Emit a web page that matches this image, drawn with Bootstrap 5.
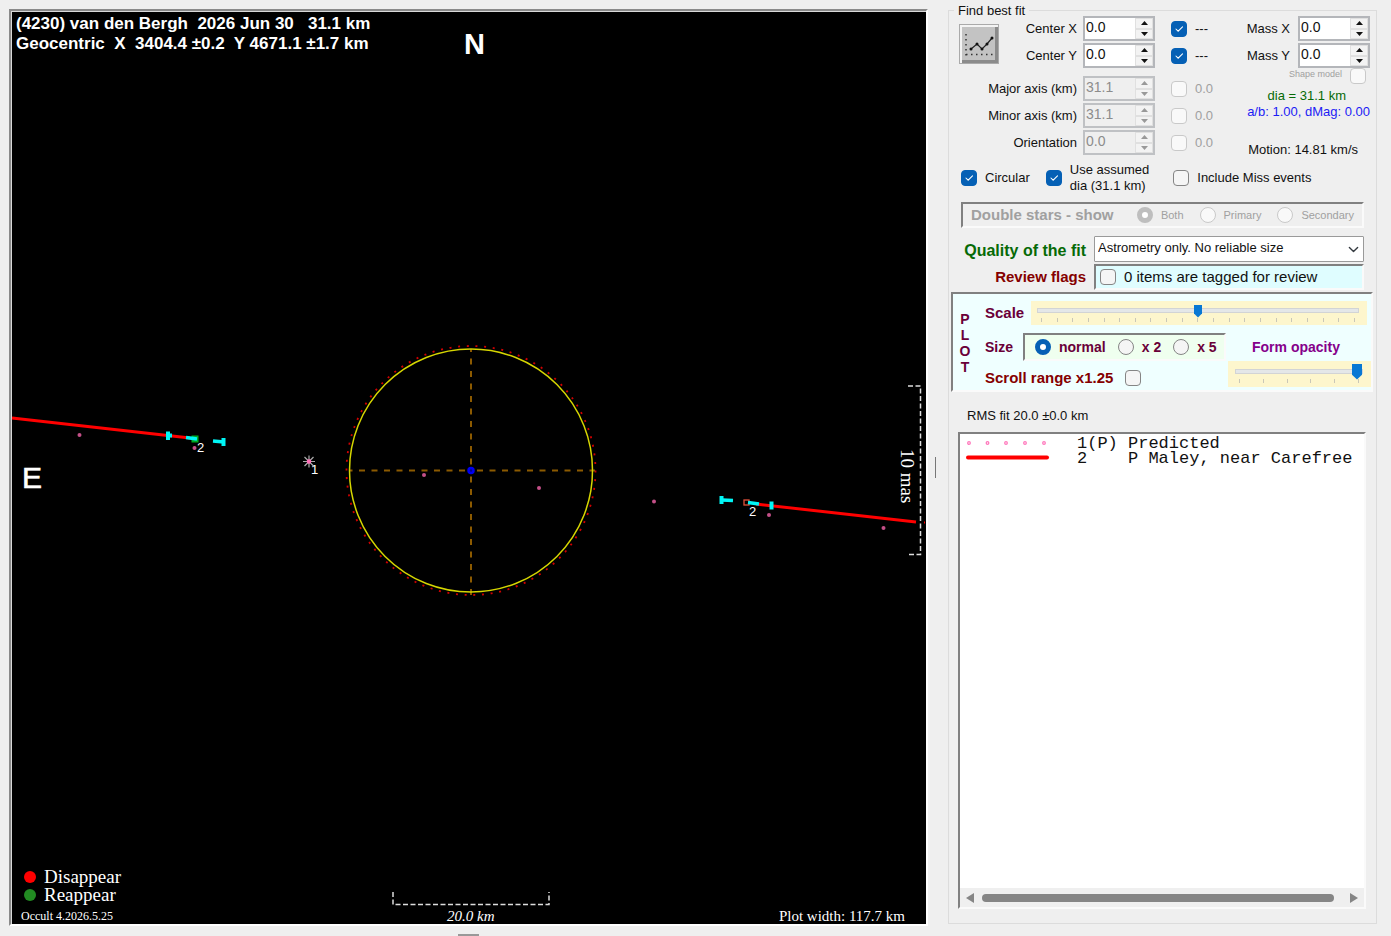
<!DOCTYPE html>
<html lang="en">
<head>
<meta charset="utf-8">
<meta name="viewport" content="width=device-width, initial-scale=1">
<title>Occult - Asteroid occultation plot</title>
<link rel="stylesheet" href="https://cdn.jsdelivr.net/npm/bootstrap@5.3.0/dist/css/bootstrap.min.css">
<style>
  body { background: #efefef; color: #111; font-family: "Liberation Sans", sans-serif; font-size: 13px; line-height: 16px; }
  .workspace { display: grid; grid-template-columns: minmax(0, 1fr) 20px 429px; min-height: 100vh; padding: 9px 14px 0 9px; grid-template-rows: minmax(0, 1fr) 10px; }
  .plot-pane { background: #000; color: #fff; border: 2px solid; border-color: #8a8a8a #fff #fff #8a8a8a; box-shadow: inset 1px 1px 0 #d8d8d8; padding: 3px 5px 0 5px; }
  .plot-title { font-size: 17px; font-weight: 700; line-height: 20px; white-space: pre; }
  .serif { font-family: "Liberation Serif", serif; }
  .legend-key { font-size: 19px; line-height: 18px; }
  .legend-key i { width: 12px; height: 12px; border-radius: 50%; display: inline-block; }
  .version-line { font-size: 12px; margin-left: -3px; }
  .width-line { font-size: 15px; }
  .grip-v { width: 1px; height: 21px; background: #777; margin-right: 5px; }
  .grip-h { width: 21px; height: 2px; background: #999; }

  .fit-group { border: 1px solid #dcdcdc; margin: 1px 0 2px; min-width: 0; padding: 0; position: relative; }
  .fit-group > legend { position: absolute; top: -8px; left: 5px; width: auto; font-size: 13px; line-height: 16px; padding: 0 4px; background: #efefef; margin: 0; }
  .fit-form { padding: 5px 6px 0 10px; }
  .inset-row { margin: 0 6px 0 2px; }
  .axes { padding-bottom: 3px; }
  .fit-rows { display: grid; grid-template-columns: 116px 72px 16px 34px; column-gap: 8px; row-gap: 2px; align-items: center; }
  .fit-rows > label { text-align: right; margin-right: -2px; }
  .fit-rows > .form-check-input { margin-left: 8px; }
  .fit-rows > span { padding-left: 8px; }
  .spin { display: flex; width: 72px; height: 25px; border: 2px solid #b4b6ba; background: #fff; }
  .spin input { width: 100%; min-width: 0; border: 0; background: transparent; padding: 0 0 3px 1px; font-size: 14px; line-height: 16px; color: #111; }
  .spin .arrows { display: flex; flex-direction: column; width: 18px; flex: none; background: #efefef; }
  .spin button { flex: 1; border: 1px solid #e0e0e0; background: #f3f3f3; padding: 0; line-height: 0; display: flex; align-items: center; justify-content: center; }
  .spin svg { width: 7px; height: 4px; fill: #111; }
  .spin.off { background: #efefef; border-color: #bfc1c4; }
  .spin.off input { color: #8c8c8c; }
  .spin.off svg { fill: #999; }
  .greyed { color: #a0a0a0; }
  .mass-row { gap: 8px; margin-bottom: 2px; }
  .chart-btn { width: 40px; height: 40px; background: #c3c3c3; border: 1px solid #aaa; box-shadow: inset 2px 2px 0 #f4f4f4, inset -3px -3px 0 #8b8b8b; padding: 0; }

  .form-check-input { width: 16px; height: 16px; margin: 0; flex: none; border: 1px solid #858585; background-color: #f5f5f5; }
  .form-check-input[type=checkbox] { border-radius: 4px; }
  .form-check-input:checked { background-color: #0560b5; border-color: #0560b5; }
  .form-check-input[type=checkbox]:checked { background-image: url("data:image/svg+xml,%3csvg xmlns='http://www.w3.org/2000/svg' viewBox='0 0 16 16'%3e%3cpath fill='none' stroke='%23fff' stroke-linecap='round' stroke-width='1.2' d='m4.5 8 2.5 2.5 5-5'/%3e%3c/svg%3e"); }
  .form-check-input[type=radio]:checked { background-image: none; background-color: #fff; border: 5px solid #0560b5; }
  .form-check-input:disabled { opacity: 1; border-color: #c9c9c9; background-color: #f9f9f9; }
  .form-check-input[type=radio]:checked:disabled { border-color: #bebebe; background-color: #fff; }
  .form-check-input:disabled ~ label { opacity: 1; }

  .sunken { border: 2px solid; border-color: #808080 #fafafa #fafafa #808080; }
  .star-box { height: 26px; }
  .micro { font-size: 11px; line-height: 12px; }
  .nano { font-size: 9px; line-height: 12px; }
  .head { font-size: 15px; font-weight: 700; }
  .headline { font-size: 16px; font-weight: 700; }
  .side-head { width: 125px; text-align: right; white-space: nowrap; flex: none; }
  .green { color: #066a06; }
  .blue { color: #1c1cf5; }
  .maroon { color: #850000; }
  .plum { color: #6a0038; }
  .purple { color: #85008b; }
  .quality { height: 26px; border: 1px solid #9a9a9a; border-radius: 1px; padding: 0 20px 3px 3px; font-size: 13px; line-height: 16px; color: #111; background-size: 11px 11px; background-position: right 4px center; }
  .flag-row { padding-top: 2px; }
  .tagged { background: #dffdff; height: 26px; font-size: 15px; }
  .plot-box { background: #efffff; width: 422px; margin-left: -8px; margin-top: 2px; padding: 7px 0 3px; font-size: 14px; font-weight: 700; }
  .letters { width: 24px; line-height: 16px; text-align: center; padding-top: 10px; flex: none; }
  .size-row { gap: 10px; }
  .size-box { background: #efffef; width: 203px; height: 28px; padding-left: 10px; }
  .slider { background: #fdf6cd; }
  .slider input { appearance: none; display: block; width: 100%; margin: 0; background: transparent; height: 16px; }
  .slider input::-webkit-slider-runnable-track { height: 5px; background: #e4e7e8; border: 1px solid #d2d4d5; }
  .slider input::-webkit-slider-thumb { appearance: none; width: 8px; height: 13px; margin-top: -4px; border: 0; background: #0878d4; clip-path: polygon(0 0, 100% 0, 100% 70%, 50% 100%, 0 70%); }
  .slider.big input::-webkit-slider-thumb { width: 10px; height: 16px; margin-top: -6px; }
  .ticks { display: flex; justify-content: space-between; height: 4px; padding: 0 4px; }
  .ticks i { width: 1px; background: #c9c7b8; }
  .scale-slider { width: 336px; height: 24px; padding: 1px 8px 0 6px; }
  .opacity-slider { width: 143px; height: 26px; padding: 2px 8px 0 7px; }

  .chord-list { background: #fff; font-family: "Liberation Mono", monospace; font-size: 17px; line-height: 15px; margin: 0 4px 14px -1px; }
  .chord-list li { white-space: pre; display: flex; align-items: center; height: 15px; }
  .chord-list li svg { width: 84px; height: 15px; flex: none; margin: 0 27px 0 6px; }
  .chord-list ul { padding: 2px 0 0; margin: 0; list-style: none; overflow: hidden; }
  .hbar { height: 19px; background: #efefef; padding: 0 6px; gap: 8px; }
  .hbar button { border: 0; background: none; padding: 0; line-height: 0; }
  .hbar .thumb { height: 8px; border-radius: 4px; background: #858585; margin-right: 8px; }
</style>
</head>
<body>
<main class="workspace">
  <section class="plot-pane position-relative d-flex flex-column justify-content-between" aria-label="Occultation plot">
    <svg class="position-absolute top-0 start-0 w-100 h-100" viewBox="11 11 915 913" role="img" aria-label="Chords and fitted circle">
      <g fill="none">
        <circle cx="471" cy="470.500" r="124.500" stroke="#d00000" stroke-width="1.800" stroke-dasharray="2 6.690"/>
        <path d="M471 470.500V349M471 470.500V595M471 470.500H350M471 470.500H595" stroke="#8c5a00" stroke-width="2" stroke-dasharray="6 6.500" stroke-dashoffset="-6"/>
        <circle cx="471" cy="470.500" r="121.500" stroke="#d6d600" stroke-width="1.500"/>
        <circle cx="471" cy="470.500" r="2.500" fill="#000090" stroke="#0000f0" stroke-width="2.500"/>
        <path d="M12 418L190 438M756 504L916 522" stroke="#f00" stroke-width="3"/>
        <path d="M924 522.500h1" stroke="#f00" stroke-width="2"/>
        <rect x="192" y="436" width="6" height="6" fill="#00a020" stroke="#00b020"/>
        <rect x="744" y="500" width="5" height="5" stroke="#e0503a" stroke-width="1.300"/>
        <g stroke="#00f6f6">
          <path d="M186 437.500L197 439M213 441L224 442M722 500L733 500.500M748 502.500L759 504" stroke-width="3.500"/>
          <path d="M168 431.500V440M223.500 438V446M721.500 496V504M771.500 501.500V509.500" stroke-width="4"/>
          <path d="M166 435.500H172" stroke-width="4"/>
        </g>
        <path d="M309 455.500V467.500M303 461.500H315M304.500 457L313.500 466M313.500 457L304.500 466" stroke="#aaa" stroke-width="1.200"/>
        <g stroke="#ddd" stroke-width="1.500" stroke-dasharray="5 2.500">
          <path d="M908 386H920.500V554.500H908"/>
          <path d="M393 892V904.500H549V892"/>
        </g>
      </g>
      <g fill="#c45088">
        <circle cx="79.500" cy="435" r="2"/><circle cx="194.500" cy="448" r="2"/><circle cx="309" cy="461.500" r="2.300" fill="#ff70b8"/>
        <circle cx="424" cy="475" r="2"/><circle cx="539" cy="488" r="2"/><circle cx="654" cy="501.500" r="2"/>
        <circle cx="769" cy="515" r="2"/><circle cx="883.500" cy="528" r="2"/>
      </g>
      <g fill="#fff" font-family="Liberation Sans, sans-serif">
        <text x="464" y="54" font-size="29" font-weight="700">N</text>
        <text x="22" y="488" font-size="30" stroke="#fff" stroke-width="0.600">E</text>
        <g font-size="13"><text x="197" y="452">2</text><text x="311" y="474">1</text><text x="749" y="516">2</text></g>
      </g>
      <g fill="#fff" font-family="Liberation Serif, serif">
        <text x="449" y="0" font-size="19" transform="translate(901 0) rotate(90)">10 mas</text>
        <text x="447" y="921" font-size="15" font-style="italic">20.0 km</text>
      </g>
    </svg>
    <div class="plot-title">(4230) van den Bergh  2026 Jun 30   31.1 km
Geocentric  X  3404.4 ±0.2  Y 4671.1 ±1.7 km</div>
    <div class="serif ps-2">
      <div class="legend-key d-flex align-items-center gap-2"><i style="background:#f00"></i>Disappear</div>
      <div class="legend-key d-flex align-items-center gap-2"><i style="background:#228b22"></i>Reappear</div>
      <div class="d-flex justify-content-between align-items-end pt-1 pe-3">
        <span class="version-line">Occult 4.2026.5.25</span><span class="width-line">Plot width: 117.7 km</span>
      </div>
    </div>
  </section>
  <div class="d-flex align-items-center justify-content-center"><div class="grip-v"></div></div>

  <fieldset class="fit-group d-flex flex-column">
    <legend>Find best fit</legend>
    <div class="fit-form d-flex flex-column flex-grow-1">
      <div class="d-flex justify-content-between">
        <div class="axes position-relative">
          <button class="chart-btn position-absolute top-0 start-0 mt-2" type="button" aria-label="Fit chart">
            <svg width="38" height="38" viewBox="0 0 38 38"><path d="M6 9v22M6 29.500h27" fill="none" stroke="#333" stroke-width="1.500" stroke-dasharray="1.500 3.500"/><path d="M11 24l6-5 5 5 5-5 5-6" fill="none" stroke="#222" stroke-width="1.200"/><g fill="#111"><circle cx="11" cy="24" r="1.500"/><circle cx="17" cy="19" r="1.500"/><circle cx="22" cy="24" r="1.500"/><circle cx="27" cy="19" r="1.500"/><circle cx="32" cy="13" r="1.500"/></g></svg>
          </button>
          <div class="fit-rows">
            <label for="cx">Center X</label>
            <div class="spin"><input id="cx" value="0.0"><div class="arrows"><button type="button" aria-label="Increase"><svg viewBox="0 0 7 4"><path d="M0 4h7L3.500 0z"/></svg></button><button type="button" aria-label="Decrease"><svg viewBox="0 0 7 4"><path d="M0 0h7L3.500 4z"/></svg></button></div></div>
            <input class="form-check-input" type="checkbox" id="fx" checked><span><label for="fx">---</label></span>
            <label for="cy">Center Y</label>
            <div class="spin"><input id="cy" value="0.0"><div class="arrows"><button type="button" aria-label="Increase"><svg viewBox="0 0 7 4"><path d="M0 4h7L3.500 0z"/></svg></button><button type="button" aria-label="Decrease"><svg viewBox="0 0 7 4"><path d="M0 0h7L3.500 4z"/></svg></button></div></div>
            <input class="form-check-input" type="checkbox" id="fy" checked><span><label for="fy">---</label></span>
          </div>
          <div class="fit-rows mt-2">
            <label for="maj">Major axis (km)</label>
            <div class="spin off"><input id="maj" value="31.1" disabled><div class="arrows"><button type="button" disabled aria-label="Increase"><svg viewBox="0 0 7 4"><path d="M0 4h7L3.500 0z"/></svg></button><button type="button" disabled aria-label="Decrease"><svg viewBox="0 0 7 4"><path d="M0 0h7L3.500 4z"/></svg></button></div></div>
            <input class="form-check-input" type="checkbox" id="fmaj" disabled><span class="greyed"><label for="fmaj">0.0</label></span>
            <label for="min">Minor axis (km)</label>
            <div class="spin off"><input id="min" value="31.1" disabled><div class="arrows"><button type="button" disabled aria-label="Increase"><svg viewBox="0 0 7 4"><path d="M0 4h7L3.500 0z"/></svg></button><button type="button" disabled aria-label="Decrease"><svg viewBox="0 0 7 4"><path d="M0 0h7L3.500 4z"/></svg></button></div></div>
            <input class="form-check-input" type="checkbox" id="fmin" disabled><span class="greyed"><label for="fmin">0.0</label></span>
            <label for="ori">Orientation</label>
            <div class="spin off"><input id="ori" value="0.0" disabled><div class="arrows"><button type="button" disabled aria-label="Increase"><svg viewBox="0 0 7 4"><path d="M0 4h7L3.500 0z"/></svg></button><button type="button" disabled aria-label="Decrease"><svg viewBox="0 0 7 4"><path d="M0 0h7L3.500 4z"/></svg></button></div></div>
            <input class="form-check-input" type="checkbox" id="fori" disabled><span class="greyed"><label for="fori">0.0</label></span>
          </div>
        </div>
        <div class="d-flex flex-column align-items-end">
          <div class="mass-row d-flex align-items-center"><label for="mx">Mass X</label>
            <div class="spin"><input id="mx" value="0.0"><div class="arrows"><button type="button" aria-label="Increase"><svg viewBox="0 0 7 4"><path d="M0 4h7L3.500 0z"/></svg></button><button type="button" aria-label="Decrease"><svg viewBox="0 0 7 4"><path d="M0 0h7L3.500 4z"/></svg></button></div></div></div>
          <div class="d-flex align-items-center gap-2"><label for="my">Mass Y</label>
            <div class="spin"><input id="my" value="0.0"><div class="arrows"><button type="button" aria-label="Increase"><svg viewBox="0 0 7 4"><path d="M0 4h7L3.500 0z"/></svg></button><button type="button" aria-label="Decrease"><svg viewBox="0 0 7 4"><path d="M0 0h7L3.500 4z"/></svg></button></div></div></div>
          <div class="d-flex gap-2 pe-1"><label class="nano greyed" for="shape">Shape model</label><input class="form-check-input" type="checkbox" id="shape" disabled></div>
          <div class="green pe-4 pt-1">dia = 31.1 km</div>
          <div class="blue">a/b: 1.00, dMag: 0.00</div>
          <div class="mt-auto me-2 pe-1">Motion: 14.81 km/s</div>
        </div>
      </div>

      <div class="inset-row d-flex align-items-center pt-1">
        <div class="d-flex align-items-center gap-2 me-3"><input class="form-check-input" type="checkbox" id="circ" checked><label for="circ">Circular</label></div>
        <div class="d-flex align-items-center gap-2 me-4"><input class="form-check-input" type="checkbox" id="assumed" checked><label for="assumed">Use assumed<br>dia (31.1 km)</label></div>
        <div class="d-flex align-items-center gap-2"><input class="form-check-input" type="checkbox" id="miss"><label for="miss">Include Miss events</label></div>
      </div>

      <div class="inset-row pt-2"><div class="star-box sunken d-flex align-items-center greyed px-2">
        <span class="head flex-grow-1">Double stars - show</span>
        <div class="d-flex gap-3 align-items-center micro">
          <div class="d-flex gap-2 align-items-center"><input class="form-check-input" type="radio" name="dbl" id="both" checked disabled><label for="both">Both</label></div>
          <div class="d-flex gap-2 align-items-center"><input class="form-check-input" type="radio" name="dbl" id="prim" disabled><label for="prim">Primary</label></div>
          <div class="d-flex gap-2 align-items-center"><input class="form-check-input" type="radio" name="dbl" id="sec" disabled><label for="sec">Secondary</label></div>
        </div>
      </div></div>

      <div class="inset-row d-flex align-items-center gap-2 pt-2">
        <label class="headline green side-head pt-1" for="quality">Quality of the fit</label>
        <select class="form-select quality" id="quality"><option>Astrometry only. No reliable size</option></select>
      </div>
      <div class="inset-row flag-row d-flex align-items-center gap-2">
        <span class="head maroon side-head">Review flags</span>
        <div class="tagged sunken d-flex align-items-center gap-2 flex-grow-1 ps-1"><input class="form-check-input" type="checkbox" id="rev"><label for="rev">0 items are tagged for review</label></div>
      </div>

      <section class="plot-box sunken d-flex plum">
        <div class="letters">P<br>L<br>O<br>T</div>
        <div class="flex-grow-1 ps-2">
          <div class="d-flex justify-content-between align-items-center pe-1"><label class="head" for="scale">Scale</label>
            <div class="slider scale-slider"><input type="range" id="scale" min="0" max="20" value="10"><div class="ticks"><i></i><i></i><i></i><i></i><i></i><i></i><i></i><i></i><i></i><i></i><i></i><i></i><i></i><i></i><i></i><i></i><i></i><i></i><i></i><i></i><i></i></div></div>
          </div>
          <div class="size-row d-flex mt-2 align-items-center">
            <span>Size</span>
            <div class="size-box sunken d-flex align-items-center gap-2">
              <input class="form-check-input" type="radio" name="size" id="s1" checked><label for="s1">normal</label>
              <input class="form-check-input ms-1" type="radio" name="size" id="s2"><label for="s2">x 2</label>
              <input class="form-check-input ms-1" type="radio" name="size" id="s5"><label for="s5">x 5</label>
            </div>
            <label class="purple ms-3" for="opacity">Form opacity</label>
          </div>
          <div class="d-flex justify-content-between">
            <div class="d-flex align-items-center gap-2 pt-2"><label class="head maroon" for="scroll">Scroll range x1.25</label><input class="form-check-input ms-1" type="checkbox" id="scroll"></div>
            <div class="slider big opacity-slider"><input type="range" id="opacity" min="0" max="5" value="5"><div class="ticks"><i></i><i></i><i></i><i></i><i></i><i></i></div></div>
          </div>
        </div>
      </section>

      <div class="mt-3 mb-2 ms-2">RMS fit 20.0 ±0.0 km</div>
      <div class="chord-list sunken d-flex flex-column flex-grow-1">
        <ul class="flex-grow-1">
          <li><svg viewBox="0 0 84 15"><g fill="#fff" stroke="#ff78bc" stroke-width="1.300"><circle cx="3" cy="7" r="1.300"/><circle cx="21.500" cy="7" r="1.300"/><circle cx="40" cy="7" r="1.300"/><circle cx="59" cy="7" r="1.300"/><circle cx="78" cy="7" r="1.300"/></g></svg>1(P) Predicted</li>
          <li><svg viewBox="0 0 84 15"><path d="M2 6.500h79" stroke="#f00" stroke-width="4" stroke-linecap="round"/></svg>2    P Maley, near Carefree</li>
        </ul>
        <div class="hbar d-flex align-items-center">
          <button type="button" aria-label="Scroll left"><svg width="8" height="10"><path d="M8 0v10L0 5z" fill="#858585"/></svg></button>
          <div class="thumb flex-grow-1"></div>
          <button type="button" aria-label="Scroll right"><svg width="8" height="10"><path d="M0 0v10l8-5z" fill="#858585"/></svg></button>
        </div>
      </div>
    </div>
  </fieldset>
  <div class="d-flex align-items-end justify-content-center"><div class="grip-h"></div></div>
</main>
<script src="https://cdn.jsdelivr.net/npm/bootstrap@5.3.0/dist/js/bootstrap.bundle.min.js"></script>
</body>
</html>
